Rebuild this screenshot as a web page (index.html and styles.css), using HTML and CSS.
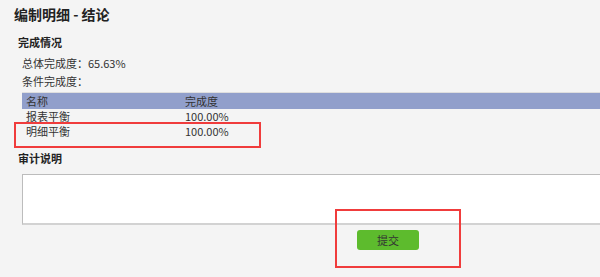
FILE: index.html
```html
<!DOCTYPE html>
<html lang="zh-CN">
<head>
    <meta charset="UTF-8">
    <meta name="viewport" content="width=device-width, initial-scale=1.0">
    <title>编制明细 - 结论</title>
    <link rel="stylesheet" href="styles.css">
</head>
<body>
    <div class="page">
        <h1 class="title">编制明细 - 结论</h1>
        <h2 class="section-title">完成情况</h2>
        <div class="content">
            <div class="info-line">总体完成度：65.63%</div>
            <div class="info-line">条件完成度：</div>
            <table class="result-table">
                <thead>
                    <tr>
                        <th class="col-name">名称</th>
                        <th>完成度</th>
                    </tr>
                </thead>
                <tbody>
                    <tr>
                        <td class="col-name">报表平衡</td>
                        <td>100.00%</td>
                    </tr>
                    <tr>
                        <td class="col-name">明细平衡</td>
                        <td>100.00%</td>
                    </tr>
                </tbody>
            </table>
        </div>
        <h2 class="section-title audit-title">审计说明</h2>
        <div class="content">
            <textarea class="audit-text"></textarea>
            <div class="button-wrapper">
                <button class="button submit">提交</button>
            </div>
        </div>
    </div>

    <!-- highlight marks drawn on top of the screenshot -->
    <div class="mark mark-row"></div>
    <div class="mark mark-button"></div>
</body>
</html>
```

FILE: styles.css
```css
* {
    margin: 0;
    padding: 0;
    box-sizing: border-box;
}

html,
body {
    overflow: hidden;
}

body {
    font-family: "Noto Sans CJK SC", "Liberation Sans", sans-serif;
    font-size: 11px;
    color: #333;
    background-color: #f4f4f4;
    width: 100%;
    height: 100vh;
    position: relative;
}

.page {
    padding-left: 14px;
    width: 754px;
}

.title {
    font-size: 14px;
    font-weight: bold;
    color: #222;
    line-height: 20px;
    margin-top: 4px;
}

.section-title {
    font-size: 11px;
    font-weight: bold;
    color: #222;
    line-height: 18px;
    margin-top: 9px;
    padding-left: 4px;
}

.content {
    padding-left: 8px;
}

.info-line {
    line-height: 18px;
}

.info-line:first-child {
    margin-top: 3px;
}

.result-table {
    width: 100%;
    border-collapse: collapse;
    margin-top: 2px;
}

.result-table th,
.result-table td {
    text-align: left;
    font-weight: normal;
    padding: 0 0 0 4px;
}

.result-table th {
    background-color: #919fcb;
    border-top: 1px solid #dedede;
    line-height: 15px;
    padding-top: 1px;
}

.result-table td {
    line-height: 15px;
}

.col-name {
    width: 159px;
}

.audit-title {
    margin-top: 10px;
    line-height: 19px;
}

.audit-text {
    display: block;
    width: 100%;
    height: 51px;
    margin-top: 6px;
    background-color: #fff;
    border: 1px solid #bcbcbc;
    border-bottom: 2px solid #d2d2d2;
    resize: none;
}

.button-wrapper {
    display: flex;
    justify-content: center;
    margin-top: 5px;
}

.button {
    width: 62px;
    height: 20px;
    border: none;
    border-radius: 3px;
    font-family: inherit;
    font-size: 11px;
    color: #333;
    cursor: pointer;
}

.submit {
    background-color: #5dbb2d;
}

.mark {
    position: absolute;
    border: 2px solid #f03c3c;
}

.mark-row {
    left: 14px;
    top: 122px;
    width: 247px;
    height: 26px;
}

.mark-button {
    left: 335px;
    top: 209px;
    width: 126px;
    height: 59px;
}
```
